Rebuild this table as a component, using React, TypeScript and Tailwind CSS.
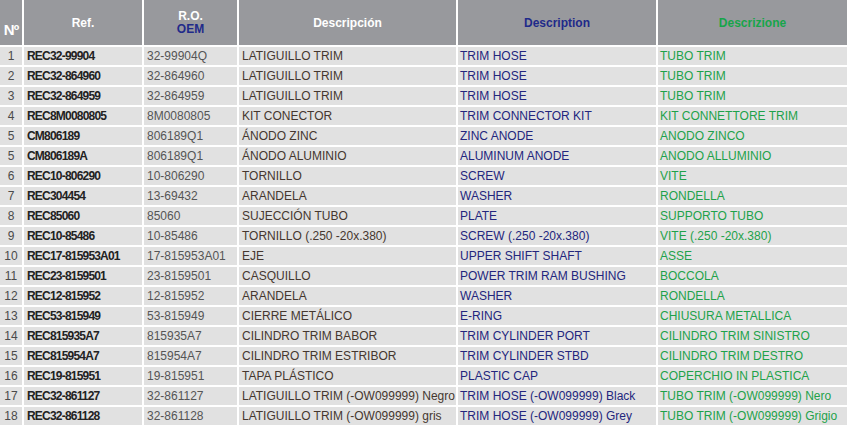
const rows: [string, string, string, string, string, string][] = [
  ['1', 'REC32-99904', '32-99904Q', 'LATIGUILLO TRIM', 'TRIM HOSE', 'TUBO TRIM'],
  ['2', 'REC32-864960', '32-864960', 'LATIGUILLO TRIM', 'TRIM HOSE', 'TUBO TRIM'],
  ['3', 'REC32-864959', '32-864959', 'LATIGUILLO TRIM', 'TRIM HOSE', 'TUBO TRIM'],
  ['4', 'REC8M0080805', '8M0080805', 'KIT CONECTOR', 'TRIM CONNECTOR KIT', 'KIT CONNETTORE TRIM'],
  ['5', 'CM806189', '806189Q1', 'ÁNODO ZINC', 'ZINC ANODE', 'ANODO ZINCO'],
  ['5', 'CM806189A', '806189Q1', 'ÁNODO ALUMINIO', 'ALUMINUM ANODE', 'ANODO ALLUMINIO'],
  ['6', 'REC10-806290', '10-806290', 'TORNILLO', 'SCREW', 'VITE'],
  ['7', 'REC304454', '13-69432', 'ARANDELA', 'WASHER', 'RONDELLA'],
  ['8', 'REC85060', '85060', 'SUJECCIÓN TUBO', 'PLATE', 'SUPPORTO TUBO'],
  ['9', 'REC10-85486', '10-85486', 'TORNILLO (.250 -20x.380)', 'SCREW (.250 -20x.380)', 'VITE (.250 -20x.380)'],
  ['10', 'REC17-815953A01', '17-815953A01', 'EJE', 'UPPER SHIFT SHAFT', 'ASSE'],
  ['11', 'REC23-8159501', '23-8159501', 'CASQUILLO', 'POWER TRIM RAM BUSHING', 'BOCCOLA'],
  ['12', 'REC12-815952', '12-815952', 'ARANDELA', 'WASHER', 'RONDELLA'],
  ['13', 'REC53-815949', '53-815949', 'CIERRE METÁLICO', 'E-RING', 'CHIUSURA METALLICA'],
  ['14', 'REC815935A7', '815935A7', 'CILINDRO TRIM BABOR', 'TRIM CYLINDER PORT', 'CILINDRO TRIM SINISTRO'],
  ['15', 'REC815954A7', '815954A7', 'CILINDRO TRIM ESTRIBOR', 'TRIM CYLINDER STBD', 'CILINDRO TRIM DESTRO'],
  ['16', 'REC19-815951', '19-815951', 'TAPA PLÁSTICO', 'PLASTIC CAP', 'COPERCHIO IN PLASTICA'],
  ['17', 'REC32-861127', '32-861127', 'LATIGUILLO TRIM (-OW099999) Negro', 'TRIM HOSE (-OW099999) Black', 'TUBO TRIM (-OW099999) Nero'],
  ['18', 'REC32-861128', '32-861128', 'LATIGUILLO TRIM (-OW099999) gris', 'TRIM HOSE (-OW099999) Grey', 'TUBO TRIM (-OW099999) Grigio'],
];

export default function App() {
  return (
    <div className="w-[847px] h-[426px] overflow-hidden bg-white font-['Liberation_Sans',Arial,sans-serif]">
      <div className="grid grid-cols-[22px_118px_93px_217px_198px_1fr] grid-rows-[45px_repeat(19,18px)] gap-[2px]">
        {/* cabecera */}
        <div className="bg-[#98999d] flex items-end justify-center pb-[8px] text-[15px] leading-[15px] font-bold text-white tracking-[-1px]">
          <span>Nº</span>
        </div>
        <div className="bg-[#98999d] flex items-center justify-center text-[12px] font-bold text-white">Ref.</div>
        <div className="bg-[#98999d] flex flex-col items-center justify-center text-[12px] font-bold leading-[13px]">
          <span className="text-white">R.O.</span>
          <span className="text-[#1f2a8a]">OEM</span>
        </div>
        <div className="bg-[#98999d] flex items-center justify-center text-[12px] font-bold text-white">Descripción</div>
        <div className="bg-[#98999d] flex items-center justify-center text-[12px] font-bold text-[#1f2a8a]">Description</div>
        <div className="bg-[#98999d] flex items-center justify-center text-[12px] font-bold text-[#17a54a]">Descrizione</div>

        {rows.map((r, i) => (
          <div key={i} className="contents text-[12px] leading-[19px] whitespace-nowrap">
            <div className="bg-[#e1e1e1] text-center text-[#4a4a4a]">{r[0]}</div>
            <div className="bg-[#e1e1e1] pl-[3px] font-bold tracking-[-0.8px] text-[#222]">{r[1]}</div>
            <div className="bg-[#e1e1e1] pl-[3px] text-[#555]">{r[2]}</div>
            <div className="bg-[#e1e1e1] pl-[3px] text-[#45372f] overflow-hidden">{r[3]}</div>
            <div className="bg-[#e1e1e1] pl-[2px] text-[#23267d] overflow-hidden">{r[4]}</div>
            <div className="bg-[#e1e1e1] pl-[2px] text-[#1ea24a] overflow-hidden">{r[5]}</div>
          </div>
        ))}
      </div>
    </div>
  );
}
